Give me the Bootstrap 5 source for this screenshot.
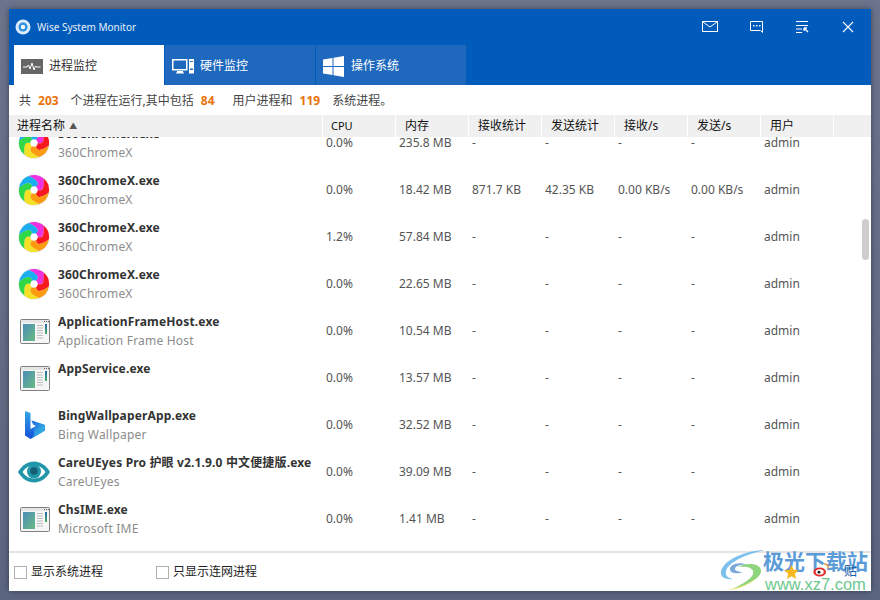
<!DOCTYPE html>
<html lang="zh-CN">
<head>
    <meta charset="UTF-8">
    <title>Wise System Monitor</title>
    <link href="https://cdn.jsdelivr.net/npm/bootstrap@5.3.0/dist/css/bootstrap.min.css" rel="stylesheet">
    <style>
        html, body { height: 100%; }
        body {
            margin: 0;
            padding: 9px;
            background: linear-gradient(#6c748c, #5c6580);
            font-family: "Noto Sans", "Noto Sans CJK SC", sans-serif;
            font-size: 12px;
            overflow: hidden;
        }
        .app-win { position: relative; width: 862px; height: 582px; background: #fff; box-shadow: 0 0 6px rgba(0,0,0,.4); }
        .app-head { height: 76px; background: #005bbb; color: #fff; }
        .app-title { height: 36px; padding-left: 6px; }
        .app-title-text { font-size: 10px; margin-left: 6px; color: #e8f0fa; }
        .win-btn { width: 46px; display: flex; justify-content: center; }
        .app-tabs { padding-left: 5px; gap: 1px; height: 40px; }
        .app-tab { width: 150px; height: 40px; padding: 2px 0 0 7px; background: #1e68bd; color: #fff; font-size: 12px; gap: 6px; }
        .app-tab.is-on { background: #fff; color: #333; }
        .tab-ico { width: 22px; flex: none; }
        .info-line { height: 30px; padding: 1px 0 0 10px; color: #444; white-space: nowrap; }
        .info-line b { color: #e8730c; font-weight: 700; margin: 0 12px 0 7px; }
        .info-line b.gap-wide { margin-right: 18px; }
        .grid-head { height: 22px; color: #111; }
        .hcell { width: 72px; flex: none; background: #f0f0f0; margin-right: 1px; padding: 0 0 0 9px; line-height: 22px; white-space: nowrap; }
        .grid-head .c-name { width: 313px; padding-left: 8px; }
        .hcell-fill { flex: 1 1 0; width: auto; margin-right: 0; }
        .hcell-latin { font-size: 11px; padding-left: 8px; }
        .sort-up { font-size: 8px; color: #555; vertical-align: 1px; margin-left: 1px; }
        .grid-body { position: relative; height: 414px; overflow: hidden; }
        .grid-rows { margin-top: -18px; }
        .prow { height: 47px; color: #555; }
        .prow .c-name { width: 313px; flex: none; display: flex; align-items: center; padding-left: 9px; }
        .app-ico { width: 32px; height: 32px; flex: none; margin-right: 8px; }
        .pname { font-weight: 700; color: #333; line-height: 19px; white-space: nowrap; letter-spacing: .15px; }
        .psub { color: #8c8c8c; line-height: 19px; height: 19px; letter-spacing: .2px; }
        .cell { width: 73px; flex: none; padding-left: 4px; white-space: nowrap; align-self: center; }
        .scroll-thumb { position: absolute; right: 2px; top: 82px; width: 7px; height: 41px; background: #cdcdcd; border-radius: 4px; }
        .app-foot { height: 40px; border-top: 2px solid #e4e4e4; padding-left: 5px; color: #222; }
        .fake-check { width: 13px; height: 13px; border: 1px solid #b0b0b0; background: #fff; margin-right: 4px; flex: none; }
        .foot-opt { margin-right: 53px; }
        .foot-ico { position: absolute; }
        .foot-star { right: 72px; bottom: 12px; }
        .foot-weibo { right: 42px; bottom: 14px; }
        .foot-tie { right: 14px; bottom: 13px; color: #1a5ea8; font-size: 13px; line-height: 16px; }
        .wm { position: absolute; right: -2px; bottom: -8px; width: 152px; height: 60px; pointer-events: none; }
        .wm-cn { position: absolute; left: 42px; top: 6px; font-size: 21px; font-weight: 700; color: #5a9bd8; line-height: 32px; white-space: nowrap; }
        .wm-en { position: absolute; left: 44px; top: 35px; font-family: "Liberation Sans", sans-serif; font-size: 16.5px; color: #6cc88e; line-height: 20px; white-space: nowrap; }
        .wm-logo { position: absolute; left: 0; top: 11px; }
    </style>
</head>
<body>
    <svg width="0" height="0" class="position-absolute">
        <defs>
            <linearGradient id="paneGrad" x1="0" y1="0" x2="1" y2="1">
                <stop offset="0" stop-color="#4a8db8"/><stop offset="1" stop-color="#6cba84"/>
            </linearGradient>
            <linearGradient id="barGrad" x1="0" y1="0" x2="0" y2="1">
                <stop offset="0" stop-color="#2a62b0"/><stop offset="1" stop-color="#46b060"/>
            </linearGradient>
            <linearGradient id="bingA" x1="0" y1="0" x2="0" y2="1">
                <stop offset="0" stop-color="#36a8e8"/><stop offset="1" stop-color="#1450d8"/>
            </linearGradient>
            <linearGradient id="bingB" x1="0" y1="0" x2="1" y2="1">
                <stop offset="0" stop-color="#1c60e0"/><stop offset="1" stop-color="#40d0e0"/>
            </linearGradient>
            <path id="petal" d="M0 -4Q2.550 -11 -11.500 -9.600A15 15 0 0 1 2.600 -14.800Q10.800 -3.300 3.460 -2Z"/>
            <symbol id="ico-swirl" viewBox="0 0 32 32">
                <circle cx="16" cy="16" r="15.500" fill="#b0b0b0" opacity=".4"/>
                <g transform="translate(16 16)">
                    <use href="#petal" fill="#ee30e0" transform="rotate(30)"/>
                    <use href="#petal" fill="#f81820" transform="rotate(90)"/>
                    <use href="#petal" fill="#fc9a10" transform="rotate(150)"/>
                    <use href="#petal" fill="#f4e024" transform="rotate(210)"/>
                    <use href="#petal" fill="#30d848" transform="rotate(270)"/>
                    <use href="#petal" fill="#18aef0" transform="rotate(330)"/>
                    <circle r="3.500" fill="#fff"/>
                </g>
            </symbol>
            <symbol id="ico-appwin" viewBox="0 0 32 32">
                <rect x="2.500" y="4.500" width="29" height="24" rx="1" fill="#f6f6f6" stroke="#808080"/>
                <rect x="3" y="5" width="28" height="3" fill="#e6e6e6"/>
                <path d="M26 6.500h1M28 6.500h1M30 6.500h1" stroke="#666"/>
                <rect x="5" y="9" width="12" height="17" fill="url(#paneGrad)"/>
                <path d="M19 10.500h6M19 13h6M19 15.500h6M19 18h6M19 20.500h6M19 23h6" stroke="#bcbcbc"/>
                <rect x="27" y="9" width="2" height="10" fill="url(#barGrad)"/>
            </symbol>
            <symbol id="ico-bing" viewBox="0 0 32 32">
                <path d="M7 2l5.500 2v16l5.500-3-3-1.500-1.500-4 13.500 4.500v5.500L12.500 30 7 26.500z" fill="url(#bingA)"/>
                <path d="M13.500 11.500l13.500 4.500c.5 3-.5 5.500-3 7.500L12.500 30c2.500-1 3.500-3 3.500-6v-4.500l5.500-2.500-6-2z" fill="url(#bingB)"/>
            </symbol>
            <symbol id="ico-eye" viewBox="0 0 32 32">
                <path d="M0 16C4 9 10 5.500 16 5.500S28 9 32 16c-4 7-10 10.500-16 10.500S4 23 0 16z" fill="#2196a8"/>
                <path d="M4.500 16c3-4.500 7-6.500 11.500-6.500S24.500 11.500 27.500 16c-3 4.500-7 6.500-11.500 6.500S7.500 20.500 4.500 16z" fill="#fff"/>
                <circle cx="16" cy="15.500" r="7" fill="#2196a8"/>
                <circle cx="16" cy="15" r="3.800" fill="#175e74"/>
            </symbol>
        </defs>
    </svg>

    <div class="app-win d-flex flex-column">
        <div class="app-head flex-none">
            <div class="app-title d-flex align-items-center">
                <svg width="16" height="16" viewBox="0 0 16 16"><circle cx="8" cy="8" r="7.500" fill="#d8ecfb"/><circle cx="8" cy="8" r="4.500" fill="#2a8fe0"/><circle cx="8" cy="8" r="2.200" fill="#fff"/></svg>
                <span class="app-title-text">Wise System Monitor</span>
                <div class="d-flex ms-auto">
                    <span class="win-btn"><svg width="16" height="11" viewBox="0 0 16 11" fill="none" stroke="#fff"><rect x=".5" y=".5" width="15" height="10"/><path d="M1 1l7 5 7-5"/></svg></span>
                    <span class="win-btn"><svg width="13" height="12" viewBox="0 0 13 12" fill="none" stroke="#fff"><path d="M12.500 11.500l-2-2H.5v-9h12z"/><path d="M3 4h1.500v1.500H3zM6 4h1.500v1.500H6zM9 4h1.500v1.500H9z" fill="#fff" stroke="none"/></svg></span>
                    <span class="win-btn"><svg width="13" height="12" viewBox="0 0 13 12" fill="none" stroke="#fff"><path d="M0 .5h12M0 4.500h12M0 8h6M0 11.500h6"/><path d="M8 7h3M8 7v3M8 7l4 4" stroke-width="1.300"/></svg></span>
                    <span class="win-btn"><svg width="12" height="12" viewBox="0 0 12 12" fill="none" stroke="#fff" stroke-width="1.100"><path d="M1 1l10 10M11 1L1 11"/></svg></span>
                </div>
            </div>
            <div class="app-tabs d-flex">
                <div class="app-tab is-on d-flex align-items-center">
                    <svg class="tab-ico" width="22" height="15" viewBox="0 0 22 15"><rect width="22" height="15" fill="#666"/><path d="M2 8h4l1.500-2 1.500 4 2-6 2 7 1.500-4 1 1h4" fill="none" stroke="#fff"/></svg>
                    <span>进程监控</span>
                </div>
                <div class="app-tab d-flex align-items-center">
                    <svg class="tab-ico" width="22" height="15" viewBox="0 0 22 15" fill="#fff"><path d="M0 0h15.500V11.500H0zM1.500 1.500v8.500h12.500V1.500z" fill-rule="evenodd"/><path d="M5 12h6v1.500h1v1H4v-1h1z"/><path d="M17 0h5V14.500h-5zM18 2v1h3V2zM18 9.500V11h3V9.500z" fill-rule="evenodd"/></svg>
                    <span>硬件监控</span>
                </div>
                <div class="app-tab d-flex align-items-center">
                    <svg class="tab-ico" width="22" height="21" viewBox="0 0 22 21" fill="#fff"><path d="M0 3.500L9.500 2v8H0zM10.500 1.800L21 0v10h-10.500zM0 11h9.500v8L0 17.500zM10.500 11H21v10l-10.500-1.800z"/></svg>
                    <span>操作系统</span>
                </div>
            </div>
        </div>

        <div class="info-line d-flex align-items-center">
            <span>共</span><b>203</b><span>个进程在运行,其中包括</span><b class="gap-wide">84</b><span>用户进程和</span><b>119</b><span>系统进程。</span>
        </div>

        <div class="grid-head d-flex">
            <div class="hcell c-name">进程名称 <span class="sort-up">▲</span></div>
            <div class="hcell hcell-latin">CPU</div>
            <div class="hcell">内存</div>
            <div class="hcell">接收统计</div>
            <div class="hcell">发送统计</div>
            <div class="hcell">接收/s</div>
            <div class="hcell">发送/s</div>
            <div class="hcell">用户</div>
            <div class="hcell hcell-fill"></div>
        </div>

        <div class="grid-body">
            <div class="grid-rows" id="rows"></div>
            <div class="scroll-thumb"></div>
        </div>

        <div class="app-foot d-flex align-items-center position-relative">
            <div class="foot-opt d-flex align-items-center"><span class="fake-check"></span>显示系统进程</div>
            <div class="foot-opt d-flex align-items-center"><span class="fake-check"></span>只显示连网进程</div>
        </div>

        <div class="wm">
            <svg class="wm-logo" width="44" height="40" viewBox="0 0 44 40">
                <path d="M44 0C24 1 4 9 0 21c-1 6 4 9 12 8-5-1-8-3-7-8C7 12 26 4 44 0z" fill="#7cc0ee"/>
                <path d="M27 15C17 11 8 15 9 20c1 4 8 4 13 2-4 0-8-1-8-3 0-3 6-5 13-4z" fill="#7aa8d8"/>
                <path d="M17 17c9-5 22-4 23 3 1 8-14 15-28 19 9-5 22-11 20-18-1-4-8-5-15-4z" fill="#8ed47c"/>
                <path d="M36 27C28 34 18 38 5 40c8 0 22-3 31-13z" fill="#e4e060"/>
            </svg>
            <span class="wm-cn">极光下载站</span>
            <span class="wm-en">www.xz7.com</span>
        </div>

        <svg class="foot-ico foot-star" width="15" height="14" viewBox="0 0 24 23"><path d="M12 0l3.500 8 8.500.8-6.400 5.700 1.900 8.500L12 18.500 4.500 23l1.900-8.500L0 8.800 8.500 8z" fill="#f5b820"/></svg>
        <svg class="foot-ico foot-weibo" width="16" height="14" viewBox="0 0 24 20"><ellipse cx="10" cy="13" rx="9.500" ry="6.800" fill="#e03030"/><ellipse cx="10" cy="13" rx="6" ry="4.200" fill="#fff"/><circle cx="9" cy="13.500" r="2.200" fill="#222"/><path d="M16 1c4-.8 7.500 2.500 6.500 7" fill="none" stroke="#e8882a" stroke-width="2"/></svg>
        <span class="foot-ico foot-tie">贴</span>
    </div>

    <script>
        const swirl = 'ico-swirl', win = 'ico-appwin';
        const rows = [
            [swirl, '360ChromeX.exe', '360ChromeX', '0.0%', '235.8 MB', '-', '-', '-', '-'],
            [swirl, '360ChromeX.exe', '360ChromeX', '0.0%', '18.42 MB', '871.7 KB', '42.35 KB', '0.00 KB/s', '0.00 KB/s'],
            [swirl, '360ChromeX.exe', '360ChromeX', '1.2%', '57.84 MB', '-', '-', '-', '-'],
            [swirl, '360ChromeX.exe', '360ChromeX', '0.0%', '22.65 MB', '-', '-', '-', '-'],
            [win, 'ApplicationFrameHost.exe', 'Application Frame Host', '0.0%', '10.54 MB', '-', '-', '-', '-'],
            [win, 'AppService.exe', '', '0.0%', '13.57 MB', '-', '-', '-', '-'],
            ['ico-bing', 'BingWallpaperApp.exe', 'Bing Wallpaper', '0.0%', '32.52 MB', '-', '-', '-', '-'],
            ['ico-eye', 'CareUEyes Pro 护眼 v2.1.9.0 中文便捷版.exe', 'CareUEyes', '0.0%', '39.09 MB', '-', '-', '-', '-'],
            [win, 'ChsIME.exe', 'Microsoft IME', '0.0%', '1.41 MB', '-', '-', '-', '-']
        ];
        document.getElementById('rows').innerHTML = rows.map(r => `
            <div class="prow d-flex">
                <div class="c-name">
                    <svg class="app-ico"><use href="#${r[0]}"/></svg>
                    <div><div class="pname">${r[1]}</div><div class="psub">${r[2]}</div></div>
                </div>
                ${r.slice(3).map(v => `<div class="cell">${v}</div>`).join('')}
                <div class="cell">admin</div>
            </div>`).join('');
    </script>
    <script src="https://cdn.jsdelivr.net/npm/bootstrap@5.3.0/dist/js/bootstrap.bundle.min.js"></script>
</body>
</html>
